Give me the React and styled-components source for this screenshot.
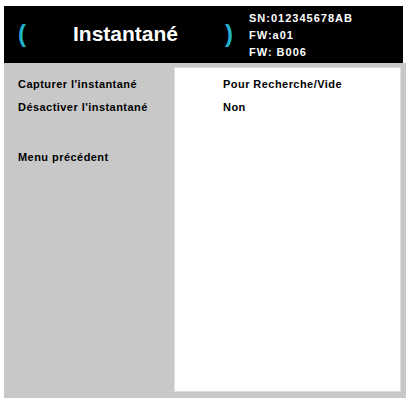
import React from "react";
import styled, { createGlobalStyle } from "styled-components";

const Global = createGlobalStyle`
  html, body { margin: 0; padding: 0; background: #ffffff; }
  body { width: 406px; height: 398px; overflow: hidden; }
`;

const Frame = styled.div`
  width: 406px;
  height: 398px;
  box-sizing: border-box;
  padding: 6px 0 0 4px;
  display: flex;
  flex-direction: column;
`;

const Header = styled.div`
  height: 57px;
  margin-right: 3px;
  background: #000;
  position: relative;
`;

const Paren = styled.span`
  position: absolute;
  left: ${(p) => p.$left}px;
  top: 14px;
  color: #1fb3cc;
  font-family: "Liberation Sans", Arial, sans-serif;
  font-weight: bold;
  font-size: 24px;
  line-height: 28px;
`;

const Title = styled.div`
  position: absolute;
  left: 69px;
  top: 16px;
  color: #fff;
  font-family: "Liberation Sans", Arial, sans-serif;
  font-weight: bold;
  font-size: 21px;
  line-height: 24px;
`;

const Info = styled.div`
  position: absolute;
  left: 245px;
  top: 4px;
  display: flex;
  flex-direction: column;
`;

const InfoLine = styled.div`
  color: #fff;
  font-family: "Liberation Sans", Arial, sans-serif;
  font-weight: bold;
  font-size: 11px;
  line-height: 17px;
  letter-spacing: 1px;
`;

const Body = styled.div`
  flex: 1;
  background: #c8c8c8;
  display: grid;
  grid-template-columns: 170px 227px;
  padding-top: 4px;
  padding-bottom: 6px;
`;

const Menu = styled.div`
  display: flex;
  flex-direction: column;
  padding: 6px 0 0 14px;
`;

const Item = styled.div`
  font-family: "Liberation Sans", Tahoma, sans-serif;
  font-weight: bold;
  font-size: 11px;
  line-height: 23px;
  letter-spacing: 0.45px;
  color: #000;
  margin-top: ${(p) => (p.$gap ? "27px" : "0")};
`;

const Panel = styled.div`
  background: #fff;
  border: 1px solid #dedede;
  box-sizing: border-box;
  display: flex;
  flex-direction: column;
  padding: 5px 0 0 48px;
`;

export default function App() {
  return (
    <>
      <Global />
      <Frame>
        <Header>
          <Paren $left={14}>(</Paren>
          <Title>Instantané</Title>
          <Paren $left={221}>)</Paren>
          <Info>
            <InfoLine>SN:012345678AB</InfoLine>
            <InfoLine>FW:a01</InfoLine>
            <InfoLine>FW: B006</InfoLine>
          </Info>
        </Header>
        <Body>
          <Menu>
            <Item>Capturer l'instantané</Item>
            <Item>Désactiver l'instantané</Item>
            <Item $gap>Menu précédent</Item>
          </Menu>
          <Panel>
            <Item>Pour Recherche/Vide</Item>
            <Item>Non</Item>
          </Panel>
        </Body>
      </Frame>
    </>
  );
}
